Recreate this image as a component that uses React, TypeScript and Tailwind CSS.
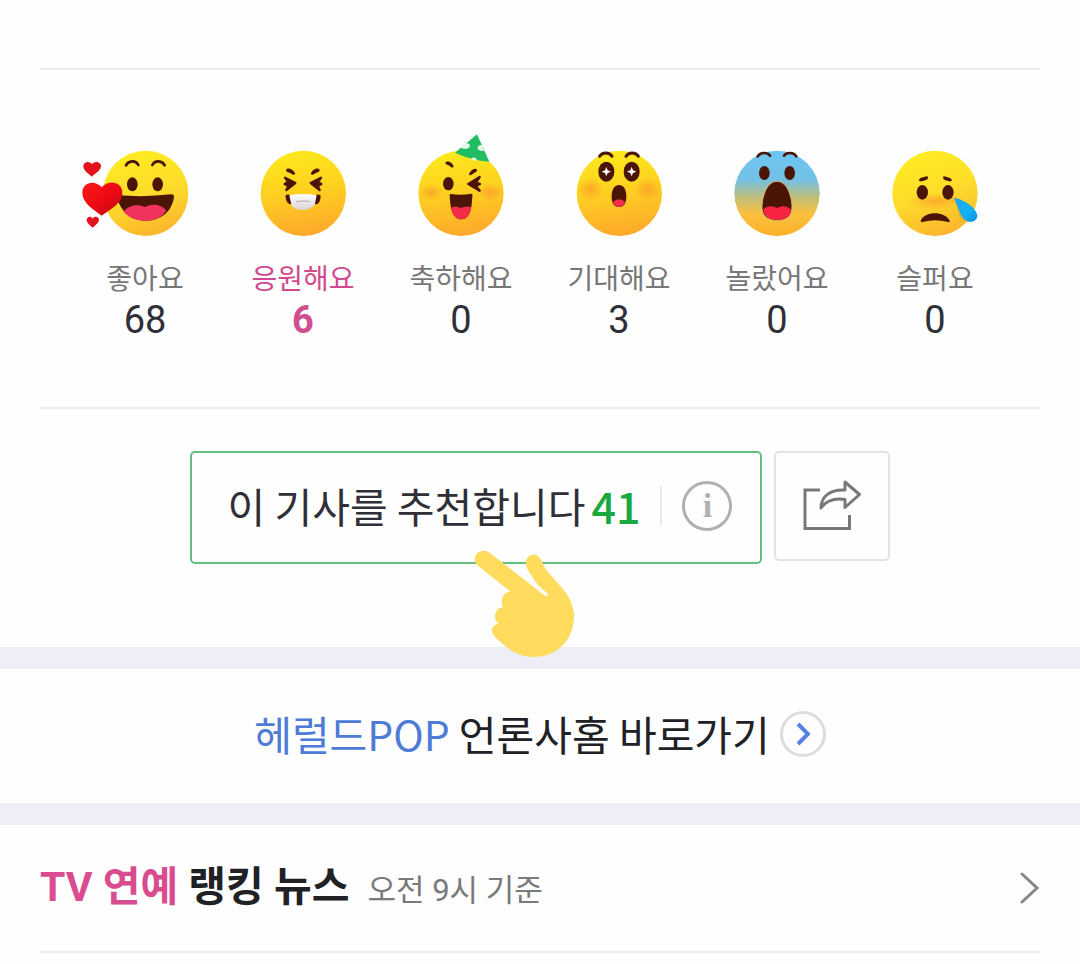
import React from 'react';

const FONT = "font-[Roboto,'Noto_Sans_CJK_KR',sans-serif]";
const NOTO = "font-['Noto_Sans_CJK_KR',sans-serif]";

type Reaction = {
  id: string;
  label: string;
  count: number;
  viewBox: string;
  cx: number;
  cy: number;
  fill: string;
  face: React.ReactNode;
  selected?: boolean;
};

const BROWN = '#4a1505';

const reactions: Reaction[] = [
  {
    id: 'like',
    label: '좋아요',
    count: 68,
    viewBox: '33 6 390 330',
    cx: 230,
    cy: 190,
    fill: 'url(#face-yellow)',
    face: (
      <>
        <g fill="none" stroke={BROWN} strokeWidth="8" strokeLinecap="round">
          <path d="M171 106C178 92 200 89 208 105" />
          <path d="M250 105C258 89 280 92 287 106" />
        </g>
        <ellipse cx="190" cy="163" rx="16" ry="21" fill={BROWN} />
        <ellipse cx="266" cy="163" rx="16" ry="21" fill={BROWN} />
        <path d="M148 196Q230 202 307 193Q316 193 315 202C308 246 276 272 230 272C186 272 156 245 146 208Z" fill={BROWN} />
        <path d="M164 245C178 226 204 220 228 231C252 218 280 224 292 242C278 262 258 272 230 272C204 272 180 264 164 245Z" fill="#f2325e" />
        <path d="M98 257C72 236 40 220 40 188C40 156 78 148 98 172C118 148 160 154 160 188C160 220 126 236 98 257Z" fill="url(#heart-red)" />
        <path d="M68 140C56 128 42 120 43 107C45 94 62 92 69 103C76 92 94 94 96 107C97 120 80 128 68 140Z" fill="#e3121c" />
        <path d="M71 293C62 284 52 278 53 269C55 259 66 257 71 266C76 257 89 260 90 269C90 278 80 284 71 293Z" fill="#e3121c" />
      </>
    ),
  },
  {
    id: 'cheer',
    label: '응원해요',
    count: 6,
    selected: true,
    viewBox: '-6 6 390 330',
    cx: 190,
    cy: 190,
    fill: 'url(#face-orange)',
    face: (
      <>
        <g fill={BROWN}>
          <path d="M138 119C143 112 158 117 165 129C166 135 160 136 155 132C149 128 143 127 139 124Z" />
          <path d="M239 119C234 112 219 117 213 129C212 135 218 136 223 132C229 128 235 127 238 124Z" />
        </g>
        <g fill={BROWN} stroke={BROWN} strokeWidth="7" strokeLinecap="round" strokeLinejoin="round">
          <path d="M135 143L166 159L139 180L145 168L134 162L144 156Z" />
          <path d="M243 143L212 159L239 180L233 168L244 162L234 156Z" />
        </g>
        <path d="M136 197Q144 190 152 197L157 222Q148 225 141 216Q137 207 136 197Z" fill={BROWN} />
        <path d="M242 197Q234 190 226 197L223 222Q231 225 238 216Q242 207 242 197Z" fill={BROWN} />
        <path d="M148 196Q190 188 230 196L224 224Q210 240 187 240Q163 240 154 224Z" fill="url(#mask-white)" />
        <path d="M168 215Q190 211 212 215" fill="none" stroke="#c2bfc1" strokeWidth="4" />
      </>
    ),
  },
  {
    id: 'congrats',
    label: '축하해요',
    count: 0,
    viewBox: '-12 21 390 330',
    cx: 183,
    cy: 205,
    fill: 'url(#face-orange)',
    face: (
      <>
        <ellipse cx="94" cy="202" rx="38" ry="25" fill="url(#blush)" />
        <ellipse cx="272" cy="202" rx="38" ry="25" fill="url(#blush)" />
        <path d="M231 28L268 110Q214 106 165 83Z" fill="#20bd63" />
        <g fill="#e4fbea">
          <path d="M193 56Q210 52 210 64Q205 75 192 71L182 68Z" />
          <path d="M246 60Q232 60 233 70Q236 79 252 78Z" />
          <path d="M212 103A10 10 0 0 1 231 107Z" />
        </g>
        <g fill={BROWN}>
          <path d="M136 112C144 105 158 114 161 124C160 131 152 127 148 122C142 119 136 119 136 112Z" />
          <path d="M231 133C222 126 209 140 207 148C210 154 216 149 221 145C227 141 232 140 231 133Z" />
          <ellipse cx="145" cy="176" rx="16" ry="20" />
        </g>
        <path d="M239 156L205 177L239 197L228 183L240 177L228 172Z" fill={BROWN} stroke={BROWN} strokeWidth="7" strokeLinejoin="round" />
        <path d="M151 207Q183 212 214 206Q219 206 217 214C215 260 207 282 184 283C162 282 151 260 149 213Q149 207 151 207Z" fill={BROWN} />
        <path d="M152 248Q168 240 182 249Q198 241 214 247C209 272 200 283 184 283C168 283 157 270 152 248Z" fill="#f12c49" />
      </>
    ),
  },
  {
    id: 'expect',
    label: '기대해요',
    count: 3,
    viewBox: '-18 6 390 330',
    cx: 178,
    cy: 190,
    fill: 'url(#face-orange)',
    face: (
      <>
        <ellipse cx="92" cy="178" rx="40" ry="36" fill="url(#blush)" />
        <ellipse cx="264" cy="178" rx="40" ry="36" fill="url(#blush)" />
        <g fill="none" stroke={BROWN} strokeWidth="9" strokeLinecap="round">
          <path d="M119 79C127 66 148 66 156 79" />
          <path d="M198 79C206 66 227 66 235 79" />
        </g>
        <ellipse cx="139" cy="125" rx="24" ry="30" fill={BROWN} />
        <ellipse cx="215" cy="125" rx="24" ry="30" fill={BROWN} />
        <g fill="#fff">
          <path d="M139 111L143 121L153 125L143 129L139 139L135 129L125 125L135 121Z" />
          <path d="M215 111L219 121L229 125L219 129L215 139L211 129L201 125L211 121Z" />
        </g>
        <path d="M177 165C192 165 200 181 199 203C198 222 190 231 177 231C164 231 156 222 155 203C154 181 162 165 177 165Z" fill={BROWN} />
        <path d="M158 216Q177 199 196 216Q190 231 177 231Q164 231 158 216Z" fill="#f12c49" />
      </>
    ),
  },
  {
    id: 'surprise',
    label: '놀랐어요',
    count: 0,
    viewBox: '-24 6 390 330',
    cx: 171,
    cy: 190,
    fill: 'url(#face-blue)',
    face: (
      <>
        <g fill="none" stroke={BROWN} strokeWidth="8" strokeLinecap="round">
          <path d="M113 79C121 66 143 66 150 77" />
          <path d="M192 77C200 66 221 66 229 79" />
        </g>
        <ellipse cx="133" cy="129" rx="16" ry="21" fill={BROWN} />
        <ellipse cx="209" cy="129" rx="16" ry="21" fill={BROWN} />
        <path
          d="M171 154C197 154 213 187 216 226C217 256 202 271 171 271C140 271 124 256 126 226C129 187 145 154 171 154Z"
          fill={BROWN}
          stroke="#d9b96b"
          strokeWidth="3"
        />
        <path d="M130 238C143 226 157 226 171 234C187 225 204 227 214 240C211 262 195 270 171 270C148 270 132 261 130 238Z" fill="#fa2442" />
      </>
    ),
  },
  {
    id: 'sad',
    label: '슬퍼요',
    count: 0,
    viewBox: '-30 6 390 330',
    cx: 165,
    cy: 190,
    fill: 'url(#face-yellow)',
    face: (
      <>
        <ellipse cx="165" cy="214" rx="82" ry="24" fill="url(#blush)" />
        <g fill={BROWN}>
          <path d="M116 151C120 141 133 142 141 139C147 141 144 149 136 151C128 153 121 157 116 151Z" />
          <path d="M216 151C212 141 199 142 192 139C187 141 189 149 197 151C205 153 212 157 216 151Z" />
          <ellipse cx="127" cy="187" rx="17" ry="22" />
          <ellipse cx="204" cy="187" rx="17" ry="22" />
          <path d="M122 272C133 242 196 242 209 272Q210 280 201 275Q166 266 131 275Q122 279 122 272Z" />
        </g>
        <path d="M220 202C230 216 230 254 246 271C252 277 263 278 272 276L285 262L240 206Z" fill="#e5a326" opacity=".6" />
        <path d="M221 203C250 208 290 232 292 257C292 275 267 282 253 268C236 251 234 224 221 203Z" fill="url(#tear)" />
      </>
    ),
  },
];

const Gradients = () => (
  <svg className="absolute size-0" aria-hidden="true">
    <defs>
      <linearGradient id="face-yellow" x1=".35" y1="0" x2=".65" y2="1">
        <stop offset="0" stopColor="#ffec22" />
        <stop offset=".5" stopColor="#fddc2b" />
        <stop offset="1" stopColor="#fcb42c" />
      </linearGradient>
      <linearGradient id="face-orange" x1=".45" y1="0" x2=".6" y2="1">
        <stop offset="0" stopColor="#fde91c" />
        <stop offset=".45" stopColor="#fed120" />
        <stop offset="1" stopColor="#fda72c" />
      </linearGradient>
      <linearGradient id="face-blue" x1="0" y1="0" x2="0" y2="1">
        <stop offset="0" stopColor="#6cc5f2" />
        <stop offset=".34" stopColor="#73c1e6" />
        <stop offset=".55" stopColor="#c1be79" />
        <stop offset=".74" stopColor="#fac03d" />
        <stop offset="1" stopColor="#fcb02c" />
      </linearGradient>
      <linearGradient id="heart-red" x1="0" y1="0" x2="1" y2="1">
        <stop offset="0" stopColor="#fb1a1b" />
        <stop offset=".5" stopColor="#ee0a13" />
        <stop offset="1" stopColor="#bf0812" />
      </linearGradient>
      <linearGradient id="mask-white" x1="0" y1="0" x2="0" y2="1">
        <stop offset="0" stopColor="#fff" />
        <stop offset="1" stopColor="#d9d4d6" />
      </linearGradient>
      <linearGradient id="tear" x1="0" y1="0" x2="1" y2="1">
        <stop offset="0" stopColor="#23a5ee" />
        <stop offset=".6" stopColor="#12b2f4" />
        <stop offset="1" stopColor="#0c8fdc" />
      </linearGradient>
      <radialGradient id="blush">
        <stop offset="0" stopColor="#fb962a" stopOpacity=".7" />
        <stop offset="1" stopColor="#fb962a" stopOpacity="0" />
      </radialGradient>
    </defs>
  </svg>
);

const Divider = () => <hr className="mx-10 border-0 border-t-2 border-[#ececec]" />;

const ReactionButton: React.FC<{ item: Reaction }> = ({ item }) => (
  <button type="button" aria-pressed={!!item.selected} className="flex flex-col items-center">
    <svg width="130" height="110" viewBox={item.viewBox} aria-hidden="true">
      <circle cx={item.cx} cy={item.cy} r="128" fill={item.fill} />
      {item.face}
    </svg>
    <span className={`mt-[18px] text-[28px] leading-10 whitespace-nowrap ${item.selected ? 'text-[#d14a8f]' : 'text-[#777777]'}`}>
      {item.label}
    </span>
    <span className={`text-[38px] leading-10 ${item.selected ? 'font-bold text-[#cf4e8f]' : 'text-[#2f3037]'}`}>
      {item.count}
    </span>
  </button>
);

const PointingHand = () => (
  <svg className="absolute left-[282px] top-[97px] z-10 pointer-events-none" width="100" height="108" viewBox="0 0 100 108" aria-hidden="true">
    <path
      fill="#ffdb5e"
      d="M3 15C-2 9 2 1 9 1C12 0 14 2 16 3L70 45C72 47 75 46 73 43C66 38 61 32 57 25C53 19 51 14 52 11C54 5 60 3 64 6C68 9 69 16 74 22L88 38C95 46 99 54 100 65C100 78 96 88 88 96C80 104 69 107 58 107C49 107 41 103 35 99L23 89C19 85 16 80 19 77C20 75 23 74 25 74C21 71 20 66 22 62C23 59 26 57 29 58C27 54 27 48 30 45C32 42 34 42 37 42Z"
    />
  </svg>
);

export default function App() {
  return (
    <main className={`min-h-screen bg-[#fefefe] text-[#202125] ${FONT}`}>
      <Gradients />

      <section className="pt-17">
        <Divider />
        <div className="grid grid-cols-6 px-[66px] pt-[62px] pb-[67px]">
          {reactions.map((item) => (
            <ReactionButton key={item.id} item={item} />
          ))}
        </div>
        <Divider />
      </section>

      <section className="flex items-start justify-center gap-3 pt-[42px] pb-[83px]">
        <div className="relative flex h-[113px] items-center rounded-[5px] border-2 border-[#63bf80] pb-1 pl-9 pr-7">
          <button type="button" className={`flex items-center gap-1.5 whitespace-nowrap text-[41px] leading-none ${NOTO}`}>
            <span className="text-[#2f3037]">이 기사를 추천합니다</span>
            <span className="text-[43px] font-medium text-[#1aa940]">41</span>
          </button>
          <span className="mx-5 h-10 w-0.5 bg-[#ebebeb]" />
          <button
            type="button"
            aria-label="추천 안내"
            className="flex size-[50px] items-center justify-center rounded-full border-3 border-[#b0b0b0] font-['Liberation_Serif',serif] text-[34px] font-bold leading-none text-[#b0b0b0]"
          >
            i
          </button>
          <PointingHand />
        </div>
        <button type="button" aria-label="공유하기" className="flex h-[110px] w-[116px] items-center justify-center rounded-[5px] border-2 border-[#e3e3e3]">
          <svg width="60" height="54" viewBox="0 0 60 54" fill="none" stroke="#787878" strokeWidth="3" aria-hidden="true">
            <path d="M18 11H3V49.500H47.500V36" />
            <path d="M43 3L57.500 15.500L43 28.500V20.500C32 19 24 22 19 29C19 17 29 10 43 11Z" strokeLinejoin="round" />
          </svg>
        </button>
      </section>

      <section className="border-y-22 border-[#eeeff6]">
        <a href="#press" className={`flex h-[134px] items-center justify-center gap-2.5 whitespace-nowrap pb-1 text-[41px] ${NOTO}`}>
          <span>
            <span className="text-[#4e7bd6]">헤럴드POP</span> 언론사홈 바로가기
          </span>
          <span className="flex size-[46px] items-center justify-center rounded-full border-3 border-[#dddde0]">
            <svg width="14" height="24" viewBox="0 0 14 24" fill="none" stroke="#5580df" strokeWidth="4" aria-hidden="true">
              <path d="M2 2L12 12L2 22" />
            </svg>
          </span>
        </a>
      </section>

      <section>
        <a href="#ranking" className="flex h-[126px] items-center justify-between px-10">
          <span className="flex items-baseline gap-4.5 whitespace-nowrap">
            <h2 className="text-[41px] font-bold">
              <span className="text-[#d94d90]">TV 연예</span> 랭킹 뉴스
            </h2>
            <span className="text-[31px] text-[#7a7a7a]">오전 9시 기준</span>
          </span>
          <svg width="20" height="34" viewBox="0 0 20 34" fill="none" stroke="#858585" strokeWidth="3" strokeLinecap="round" aria-hidden="true">
            <path d="M2 3L17 17L2 31" />
          </svg>
        </a>
        <Divider />
      </section>
    </main>
  );
}
